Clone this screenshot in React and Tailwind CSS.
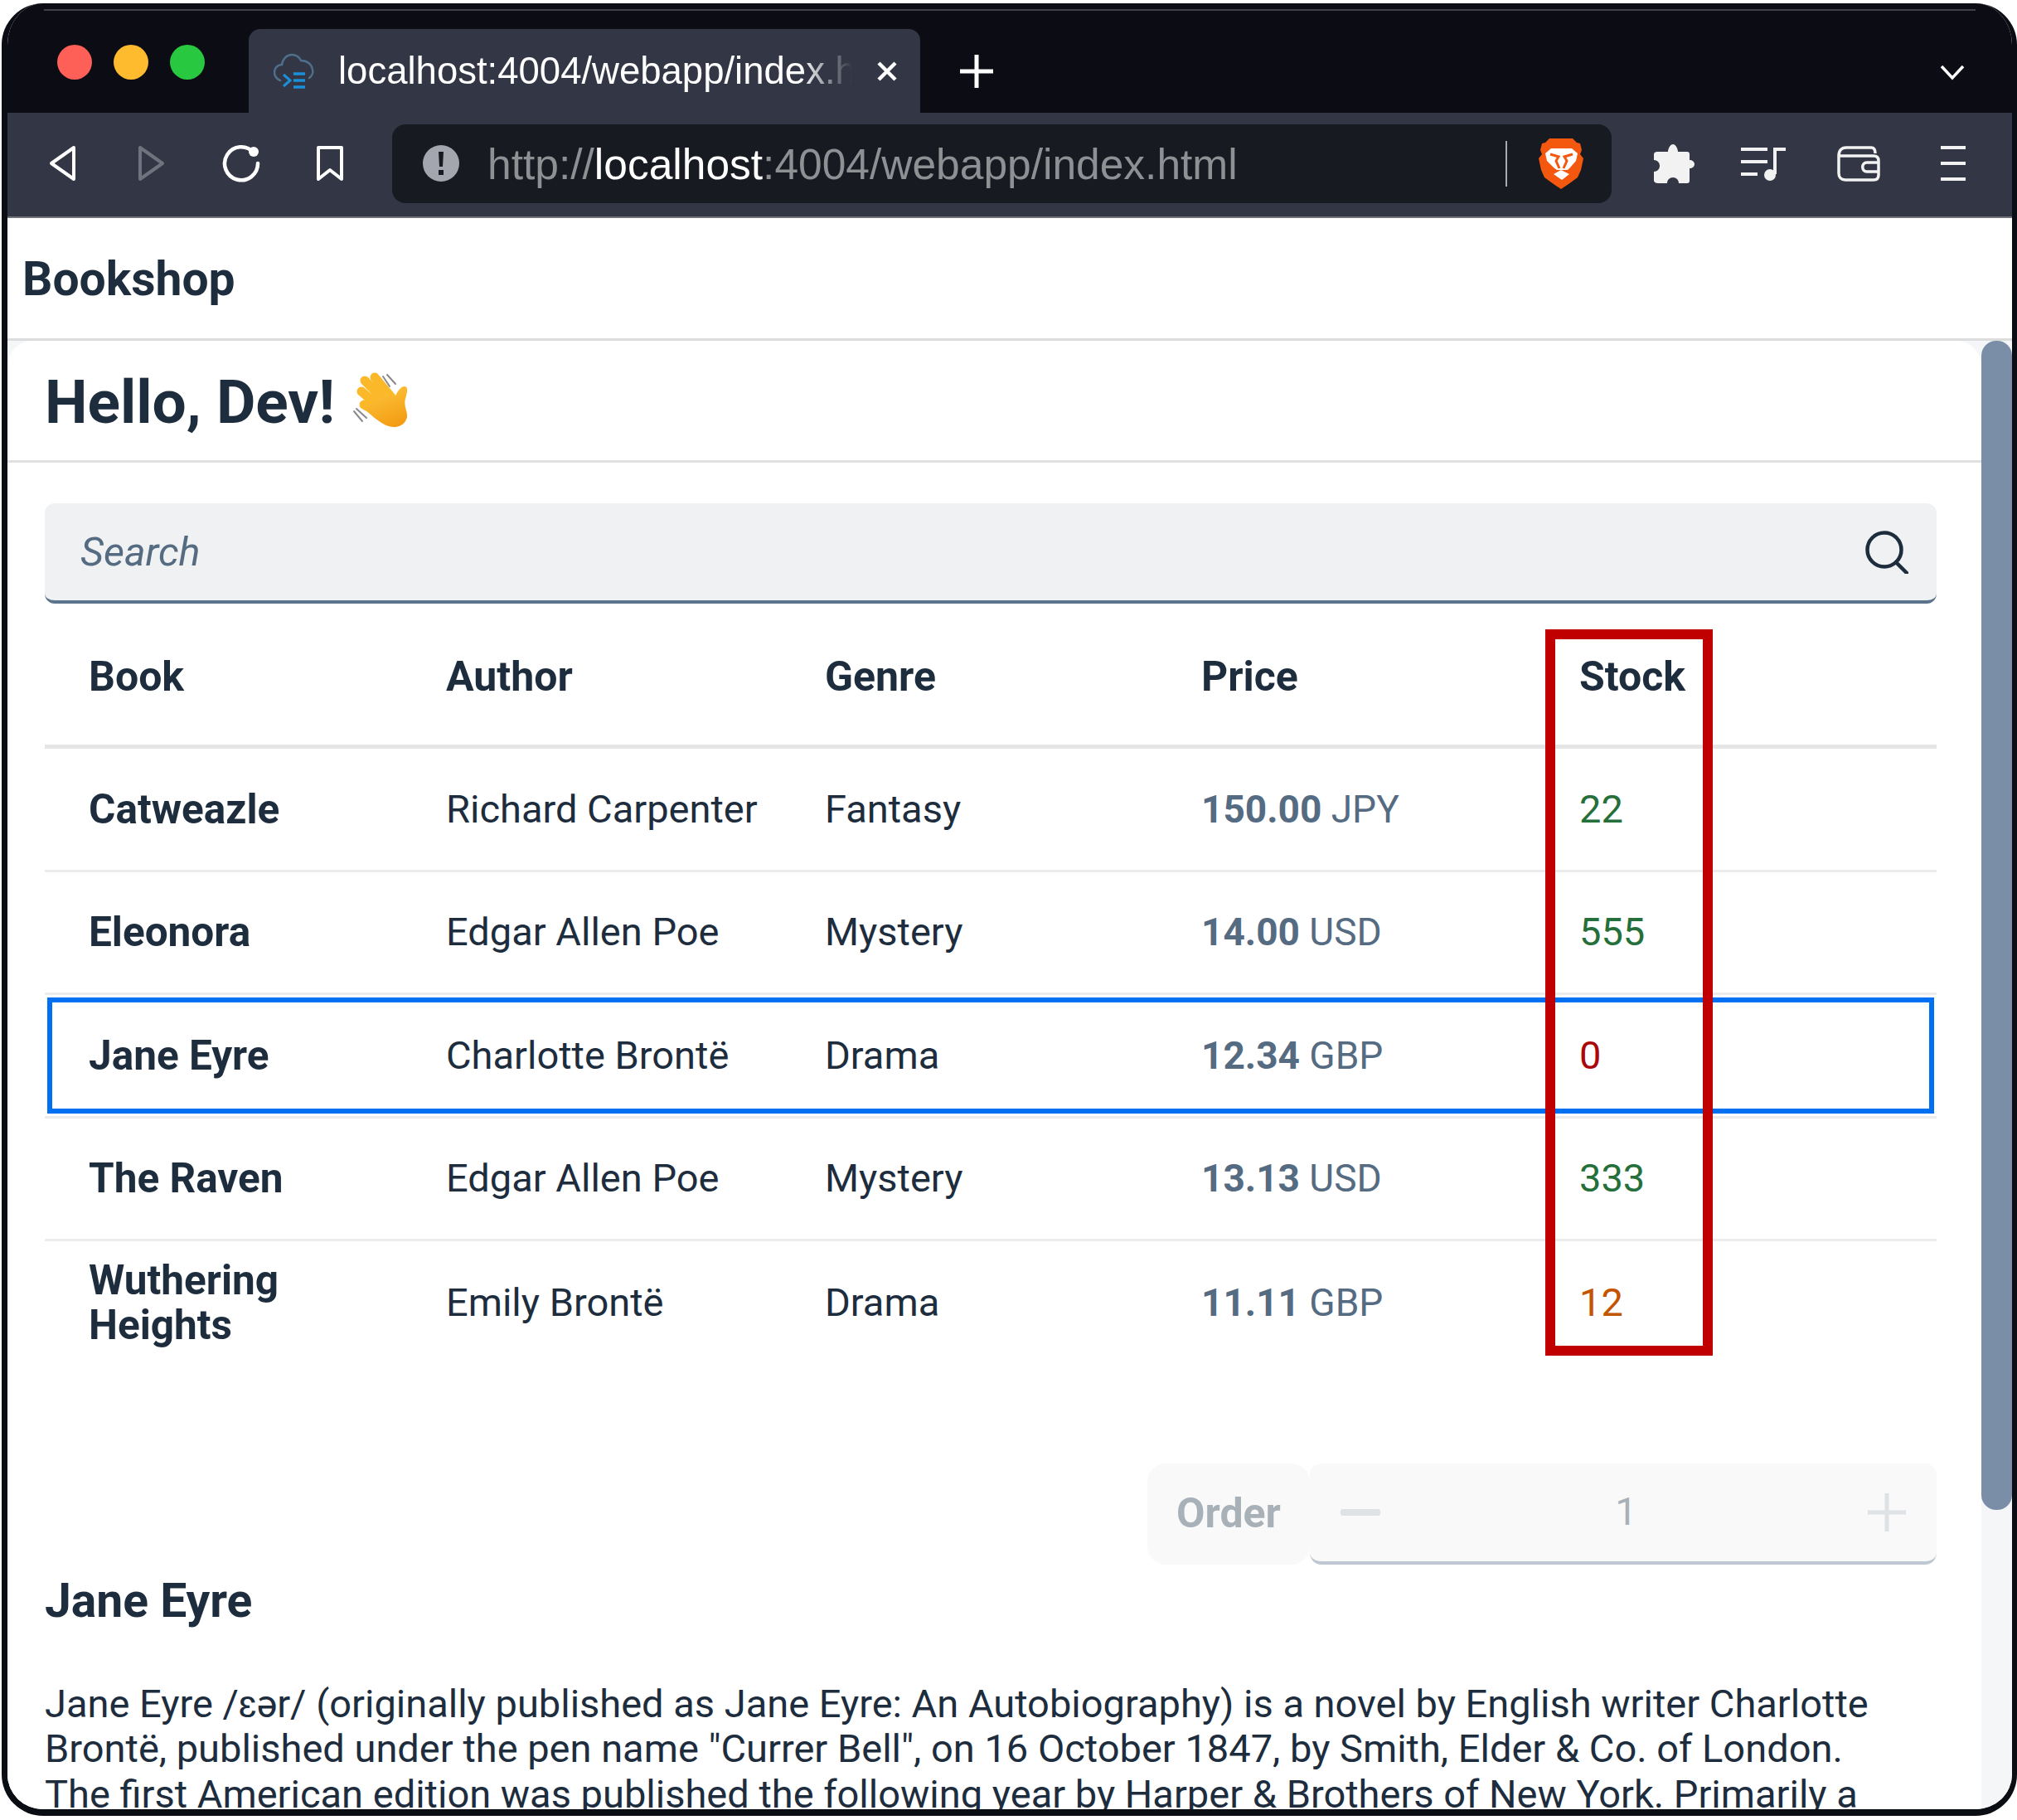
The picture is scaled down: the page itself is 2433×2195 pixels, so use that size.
const SANS = "font-['Roboto','Liberation_Sans',sans-serif]";

const books = [
  { title: "Catweazle", author: "Richard Carpenter", genre: "Fantasy", price: "150.00", currency: "JPY", stock: "22", color: "text-[#256f3a]" },
  { title: "Eleonora", author: "Edgar Allen Poe", genre: "Mystery", price: "14.00", currency: "USD", stock: "555", color: "text-[#256f3a]" },
  { title: "Jane Eyre", author: "Charlotte Brontë", genre: "Drama", price: "12.34", currency: "GBP", stock: "0", color: "text-[#aa0808]", selected: true },
  { title: "The Raven", author: "Edgar Allen Poe", genre: "Mystery", price: "13.13", currency: "USD", stock: "333", color: "text-[#256f3a]" },
  { title: "Wuthering Heights", author: "Emily Brontë", genre: "Drama", price: "11.11", currency: "GBP", stock: "12", color: "text-[#c35500]", last: true },
];

function Favicon() {
  return (
    <svg width="50" height="44" viewBox="0 0 50 44" fill="none">
      <path d="M8 33C3 31 1 27 1 23c0-5 4-9 9-9 1-7 6-12 12-12 5 0 9 3 11 7 7 0 13 4 14 11 1 4-1 8-4 10" stroke="#4f6f8c" strokeWidth="2.5" strokeLinecap="round" />
      <path d="M12 26l8 7-8 7" stroke="#1b90d8" strokeWidth="3" />
      <path d="M24 25h14M24 33h14M24 41h14" stroke="#1b90d8" strokeWidth="3.5" />
    </svg>
  );
}

function BraveLogo() {
  return (
    <svg width="54" height="61" viewBox="0 0 54 61">
      <path d="M13 0h28l5 5 4 1 2 8-2 5 4 5-3 14-4 9-11 8-9 6-9-6-11-8-4-9L0 24l4-5-2-5 2-8 4-1z" fill="#f4580f" />
      <path d="M8 18l7-6h25l7 6-2 9-7 8-3 3H22l-4-3-8-8z" fill="#fff" />
      <path d="M14 19l10 3-3 5 4 9M41 19l-10 3 3 5-4 9" fill="none" stroke="#f4580f" strokeWidth="3" />
      <path d="M18 43l9-5 10 5-9 7z" fill="#fff" />
    </svg>
  );
}

function WaveHand() {
  return (
    <svg width="100" height="90" viewBox="0 0 100 90" fill="none">
      <defs>
        <linearGradient id="hand" x1="0.3" y1="0" x2="0.7" y2="1">
          <stop offset="0" stopColor="#fdc43a" />
          <stop offset="1" stopColor="#f39c12" />
        </linearGradient>
      </defs>
      <path d="M50 13l8 12M55 11l10 11M15 55l10 12M18 52l12 11" stroke="#8a8a8a" strokeWidth="2" strokeLinecap="round" />
      <path d="M40 14l20 24M28 18l24 24M24 31l22 19M27 47l19 11" stroke="#fbb92a" strokeWidth="11" strokeLinecap="round" />
      <path d="M55 33l9 5c3-6 7-13 12-13 5 0 3 8 1 15-3 10 5 18 1 25-5 11-18 11-28 5-10-6-18-13-23-20z" fill="url(#hand)" />
    </svg>
  );
}

function BrowserChrome() {
  return (
    <div className="flex flex-col">
      <div className="flex h-[132px] flex-col bg-[#0b0c14] pt-[7px]">
        <div className="mx-[44px] h-[2px] bg-[#3f414b]" />
        <div className="flex flex-1 items-end">
          <div className="mb-[40px] ml-[60px] flex self-end gap-[26px]">
            <span className="h-[42px] w-[42px] rounded-full bg-[#fe5f57]" />
            <span className="h-[42px] w-[42px] rounded-full bg-[#febb2e]" />
            <span className="h-[42px] w-[42px] rounded-full bg-[#28c840]" />
          </div>
          <div className="ml-[53px] flex h-[101px] w-[810px] items-center rounded-t-[14px] bg-[#333644] pl-[30px]">
            <Favicon />
            <span className="ml-[28px] w-[620px] overflow-hidden whitespace-nowrap pt-[2px] font-['Liberation_Sans',sans-serif] text-[45.5px] leading-[1.2] text-white [mask-image:linear-gradient(to_right,black_90%,transparent)]">
              localhost:4004/webapp/index.html
            </span>
            <svg className="ml-[29px]" width="26" height="26" viewBox="0 0 26 26" stroke="#fff" strokeWidth="4.5">
              <path d="M3 3l20 20M23 3L3 23" />
            </svg>
          </div>
          <svg className="mb-[30px] ml-[48px]" width="40" height="40" viewBox="0 0 40 40" stroke="#fff" strokeWidth="5">
            <path d="M20 0v40M0 20h40" />
          </svg>
          <svg className="mb-[39px] ml-auto mr-[57px]" width="30" height="20" viewBox="0 0 30 20" fill="none" stroke="#fff" strokeWidth="3.5">
            <path d="M2 3l13 14L28 3" />
          </svg>
        </div>
      </div>
      <div className="flex h-[127px] items-center border-b-[2px] border-[#70727c] bg-[#333644] pb-[3px] pl-[50px]">
        <svg width="33" height="44" viewBox="0 0 33 44" fill="none" stroke="#fff" strokeWidth="4" strokeLinejoin="round">
          <path d="M30 3v38L3 22z" />
        </svg>
        <svg className="ml-[74px]" width="33" height="44" viewBox="0 0 33 44" fill="none" stroke="#70737d" strokeWidth="4" strokeLinejoin="round">
          <path d="M3 3v38l27-19z" />
        </svg>
        <svg className="ml-[68px]" width="48" height="46" viewBox="0 0 48 46" fill="none" stroke="#fff" strokeWidth="4.5">
          <path d="M39 10A20 20 0 1 0 44 23" strokeLinecap="round" />
          <circle cx="39" cy="9" r="6" fill="#fff" stroke="none" />
        </svg>
        <svg className="ml-[66px]" width="34" height="44" viewBox="0 0 34 44" fill="none" stroke="#fff" strokeWidth="4" strokeLinejoin="round">
          <path d="M3 3h28v38L17 30 3 41z" />
        </svg>
        <div className="ml-[58px] flex h-[95px] w-[1471px] items-center rounded-[16px] bg-[#181a21] pl-[37px] pr-[34px]">
          <svg width="44" height="44" viewBox="0 0 44 44">
            <circle cx="22" cy="22" r="22" fill="#a3a6ae" />
            <path d="M19 8h6l-1 18h-4zM19 30h6v6h-6z" fill="#181a21" />
          </svg>
          <span className="ml-[34px] flex-1 whitespace-nowrap pt-[3px] font-['Liberation_Sans',sans-serif] text-[51.5px] leading-[1.2] text-[#8f9094]">
            http://<span className="text-white">localhost</span>:4004/webapp/index.html
          </span>
          <span className="h-[55px] w-[2px] bg-[#a9aab0]" />
          <span className="ml-[38px]"><BraveLogo /></span>
        </div>
        <svg className="ml-[51px]" width="49" height="47" viewBox="0 0 49 47" fill="#f2f2f2">
          <path d="M17 9c0-4 3-9 6-9s6 5 6 9h11c2 0 3 1 3 3v7c3 0 6 2 6 5s-3 5-6 5v15c0 2-1 3-3 3H30c0-4-3-7-7-7s-7 3-7 7H5c-3 0-5-2-5-3V33c4 0 7-3 7-7s-3-7-7-7v-7c0-2 2-3 4-3z" />
        </svg>
        <svg className="ml-[56px]" width="54" height="41" viewBox="0 0 54 41" fill="none" stroke="#f2f2f2" strokeWidth="4">
          <path d="M0 3h32M0 18h32M0 33h20M41 33V3h13" />
          <ellipse cx="35" cy="34" rx="7" ry="7" fill="#f2f2f2" stroke="none" />
        </svg>
        <svg className="ml-[62px]" width="52" height="43" viewBox="0 0 52 43" fill="none" stroke="#f2f2f2" strokeWidth="3.5">
          <path d="M2 12c0-6 3-10 9-10h30c4 0 5 3 5 7M2 12h42c4 0 6 2 6 6v17c0 4-2 6-6 6H10c-5 0-8-3-8-8z" />
          <path d="M50 20H36c-7 0-7 11 0 11h14" />
        </svg>
        <svg className="ml-[73px]" width="30" height="44" viewBox="0 0 30 44" stroke="#f2f2f2" strokeWidth="4">
          <path d="M0 3h30M0 22h30M0 41h30" />
        </svg>
      </div>
    </div>
  );
}

function BookRow({ book }) {
  return (
    <div className={book.last ? "h-[148.5px]" : "h-[148.5px] border-b-[3px] border-[#ececec]"}>
      <div className={`grid h-full grid-cols-[431px_457px_454px_456px_1fr] items-center pl-[53px] text-[47px] leading-[54px] text-[#1d2d3e] ${book.selected ? "outline-[6px] outline-solid outline-[#0070f2] -outline-offset-[9px]" : ""}`}>
        <span className="pr-[60px] text-[49.5px] font-bold">{book.title}</span>
        <span>{book.author}</span>
        <span>{book.genre}</span>
        <span className="text-[46px] text-[#556b82]">
          <b>{book.price}</b> {book.currency}
        </span>
        <span className={book.color}>{book.stock}</span>
      </div>
    </div>
  );
}

export default function App() {
  return (
    <div className={`h-[2195px] w-[2433px] bg-white pb-[5px] pl-[2px] pt-[4px] ${SANS}`}>
      <div className="flex h-full flex-col overflow-hidden rounded-[50px] border-b-[8px] border-l-[7px] border-r-[6px] border-[#0b0d14] bg-white">
        <BrowserChrome />
        <header className="flex h-[148px] items-center border-b-[3px] border-[#dcdcdc] pl-[18px] pt-[3px] text-[57px] font-bold text-[#1d2d3e]">
          Bookshop
        </header>
        <div className="flex min-h-0 flex-1 bg-[#f5f6f7]">
          <main className="min-h-0 flex-1 overflow-hidden rounded-t-[30px] bg-white">
            <div className="flex h-[147px] items-center border-b-[3px] border-[#e1e1e1] pl-[45px] pt-[5px] text-[73px] font-bold text-[#1d2d3e]">
              Hello, Dev! <span className="ml-[8px] flex"><WaveHand /></span>
            </div>
            <div className="pl-[45px] pr-[54px] pt-[49px]">
              <div className="flex h-[121px] items-center justify-between rounded-[12px] border-b-[4px] border-[#5b738b] bg-[#eff1f2] pl-[43px] pr-[34px]">
                <span className="pt-[2px] text-[48.5px] italic text-[#556b81]">Search</span>
                <svg width="52" height="52" viewBox="0 0 52 52" fill="none" stroke="#1d2d3e" strokeWidth="4.5">
                  <circle cx="23" cy="23" r="20.5" />
                  <path d="M37 38l13 13" strokeLinecap="round" />
                </svg>
              </div>
              <div className="mt-[6px] grid h-[169px] grid-cols-[431px_457px_454px_456px_1fr] items-center border-b-[5px] border-[#e5e5e5] pl-[53px] text-[50px] font-bold text-[#1d2d3e]">
                <span>Book</span>
                <span>Author</span>
                <span>Genre</span>
                <span>Price</span>
                <span>Stock</span>
              </div>
              {books.map((book) => (
                <BookRow key={book.title} book={book} />
              ))}
              <div className="mt-[119px] flex justify-end">
                <div className="flex h-[122px] w-[196px] items-center justify-center rounded-[22px] bg-[#f9f9f9] text-[50px] font-bold text-[#a8b0b8]">
                  Order
                </div>
                <div className="flex h-[122px] w-[756px] items-center justify-between rounded-[14px] border-b-[4px] border-[#bdc8d3] bg-[#f9f9f9] px-[37px] text-[47px] text-[#a8b0b8]">
                  <svg width="48" height="8" viewBox="0 0 48 8"><rect width="48" height="8" rx="3" fill="#dfe2e5" /></svg>
                  <span className="ml-[5px]">1</span>
                  <svg width="46" height="46" viewBox="0 0 46 46" stroke="#dfe2e5" strokeWidth="5"><path d="M23 0v46M0 23h46" /></svg>
                </div>
              </div>
              <h2 className="mt-[15px] text-[57px] font-bold leading-[58px] text-[#1d2d3e]">Jane Eyre</h2>
              <p className="mt-[68px] pr-[40px] text-[47px] leading-[54.5px] text-[#1d2d3e]">
                Jane Eyre /ɛər/ (originally published as Jane Eyre: An Autobiography) is a novel by English writer Charlotte
                Brontë, published under the pen name "Currer Bell", on 16 October 1847, by Smith, Elder &amp; Co. of London.
                The first American edition was published the following year by Harper &amp; Brothers of New York. Primarily a
                bildungsroman, Jane Eyre follows the experiences of its eponymous heroine.
              </p>
            </div>
          </main>
          <div className="w-[37px] shrink-0">
            <div className="h-[1410px] rounded-[18px] bg-[#7b8ea8]" />
          </div>
        </div>
        {/* red highlight around the stock column */}
        <div className="absolute left-[1864px] top-[759px] h-[876px] w-[202px] border-[12px] border-[#c00000]" />
      </div>
    </div>
  );
}
